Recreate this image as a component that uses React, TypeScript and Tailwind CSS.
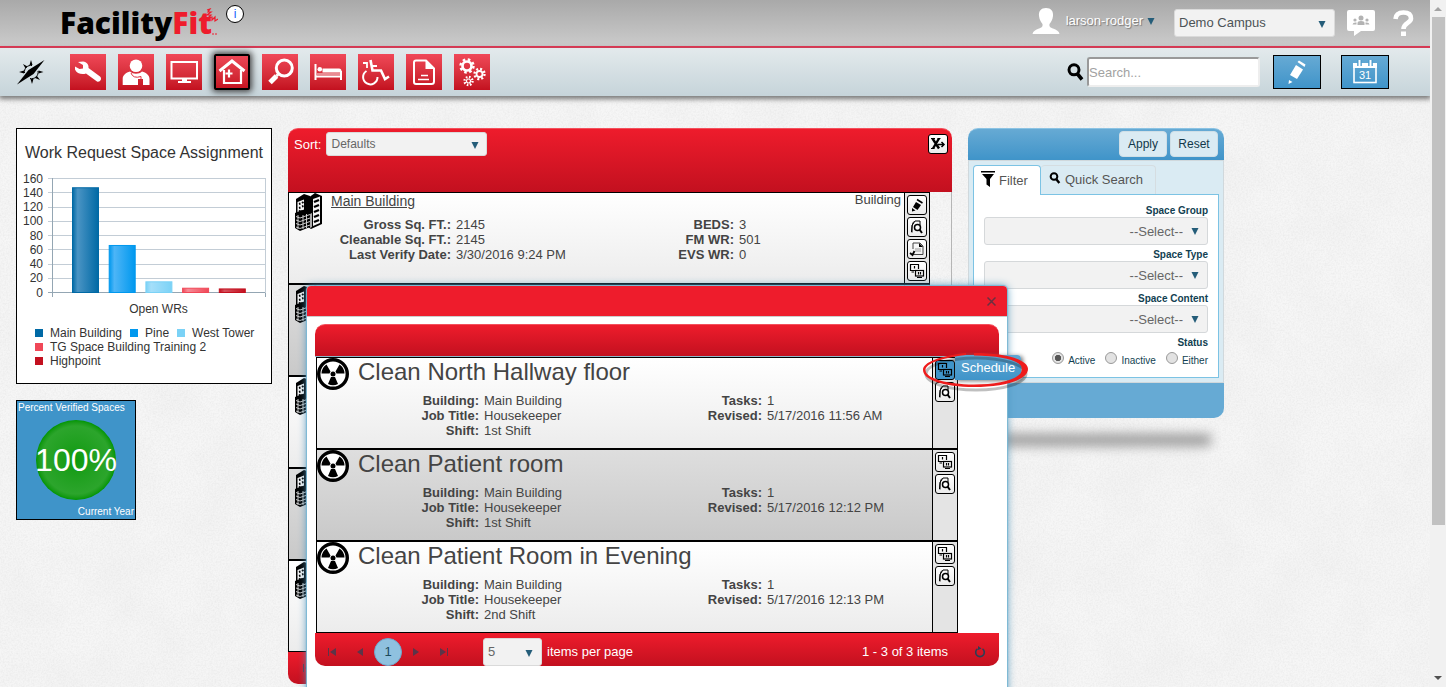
import type { ReactNode } from 'react';
import clsx from 'clsx';

type Detail = [label: string, value: string];

const chartBars = [
  { name: 'Main Building', value: 147, from: '#4a94c4', to: '#0069a5' },
  { name: 'Pine', value: 66, from: '#4db5f7', to: '#0098ee' },
  { name: 'West Tower', value: 15, from: '#a5dffa', to: '#7bd2f6' },
  { name: 'TG Space Building Training 2', value: 6, from: '#f68b96', to: '#f04858' },
  { name: 'Highpoint', value: 5, from: '#d5505c', to: '#c3101f' },
];

const axisTicks = [160, 140, 120, 100, 80, 60, 40, 20, 0];

const schedules = [
  { title: 'Clean North Hallway floor', shift: '1st Shift', revised: '5/17/2016 11:56 AM' },
  { title: 'Clean Patient room', shift: '1st Shift', revised: '5/17/2016 12:12 PM' },
  { title: 'Clean Patient Room in Evening', shift: '2nd Shift', revised: '5/17/2016 12:13 PM' },
];

/* ---------- icons ---------- */

function Gear({ cx, cy, r }: { cx: number; cy: number; r: number }) {
  const tooth = (2 * Math.PI * (r + 2)) / 16;
  return (
    <g fill="none" stroke="#fff">
      <circle cx={cx} cy={cy} r={r} strokeWidth={r * 0.6} />
      <circle cx={cx} cy={cy} r={r + 2} strokeWidth="2.4" strokeDasharray={`${tooth} ${tooth}`} />
    </g>
  );
}

const navItems: { label: string; icon: ReactNode }[] = [
  {
    label: 'Work requests',
    icon: (
      <path
        fill="#fff"
        d="M8 8L13 7.5C17 8 19 11 18.5 14L30 22.5C32.5 25 30 28.5 27 27.5L16 19.5C12 21 6.5 19.5 5 15.5L5 12.5L9.5 15L13 14.5L13 11Z"
      />
    ),
  },
  {
    label: 'Staff',
    icon: (
      <>
        <circle cx="18" cy="11.7" r="6.3" fill="#fff" />
        <path fill="#fff" d="M4.7 31V25C4.7 21 8 18.5 12 17.5C15 20.5 21 20.5 24 17.5C28 18.5 31.5 21 31.5 25V31H25V25H20V31Z" />
        <path d="M13 19Q15 25 23 22.5V25" fill="none" stroke="#e0303f" />
      </>
    ),
  },
  {
    label: 'Equipment',
    icon: (
      <>
        <rect x="5.5" y="8" width="25.5" height="16.5" fill="none" stroke="#fff" strokeWidth="2" />
        <path d="M16 25H21V27H25V29H12V27H16Z" fill="#fff" />
      </>
    ),
  },
  {
    label: 'Spaces',
    icon: (
      <>
        <path d="M5.5 17L18 7L30.5 17" fill="none" stroke="#fff" strokeWidth="3" />
        <path d="M10 16V29H27V16" fill="none" stroke="#fff" strokeWidth="2.2" />
        <path d="M15 15.5V23.5M11.5 19.5H18.5" stroke="#fff" strokeWidth="2.2" />
      </>
    ),
  },
  {
    label: 'Inspections',
    icon: (
      <>
        <circle cx="22.3" cy="14" r="8" fill="none" stroke="#fff" strokeWidth="3" />
        <path d="M16 20.5L14.5 22" stroke="#fff" strokeWidth="3" />
        <path d="M14.5 22L8 28.5" stroke="#fff" strokeWidth="5" />
      </>
    ),
  },
  {
    label: 'Beds',
    icon: (
      <>
        <path d="M5.5 10V26M5.5 22.5H31V26M31 22V17" fill="none" stroke="#fff" strokeWidth="2" />
        <circle cx="9.8" cy="15.3" r="2.3" fill="#fff" />
        <path d="M12.5 14.5H29Q31.5 14.5 31.5 17V18.5H12.5Z" fill="#fff" />
        <path d="M7 20H31" stroke="#fff" strokeOpacity=".6" strokeWidth="1.5" />
      </>
    ),
  },
  {
    label: 'Accessibility',
    icon: (
      <>
        <path d="M8.5 17A7.2 7.2 0 1 0 19.5 23" fill="none" stroke="#fff" strokeWidth="2" />
        <path d="M12.5 6L14.5 16.5H23L27 25L31 22.5" fill="none" stroke="#fff" strokeWidth="2.6" />
        <path d="M5 9H9V14M14 12H19" fill="none" stroke="#fff" strokeWidth="1.8" />
      </>
    ),
  },
  {
    label: 'Documents',
    icon: (
      <>
        <path d="M10 6.5H20L28 14.5V27.5Q28 30 25.5 30H10Q8 30 8 28V8.5Q8 6.5 10 6.5Z" fill="none" stroke="#fff" strokeWidth="2" />
        <path d="M19.5 6L28.5 15H19.5Z" fill="#fff" />
        <path d="M15 21.5H22M12 25.5H23" stroke="#fff" strokeWidth="1.6" />
      </>
    ),
  },
  {
    label: 'Settings',
    icon: (
      <>
        <Gear cx={13} cy={12} r={4.5} />
        <Gear cx={25.5} cy={20} r={3} />
        <Gear cx={14.5} cy={27} r={2} />
      </>
    ),
  },
];

function Caret({ className }: { className?: string }) {
  return (
    <svg viewBox="0 0 8 7" className={clsx('h-[7px] w-2 pointer-events-none', className)}>
      <path d="M.5 0H7.5L4 7Z" fill="#255d79" />
    </svg>
  );
}

function CompassIcon() {
  return (
    <svg viewBox="0 0 28 26" className="h-[26px] w-7">
      <path d="M14 1L15.5 6H12.5ZM15 25L13.5 20H16.5ZM2 13L7 11.5V14.5ZM26.5 13L21.5 11.5V14.5ZM6 5L10.5 7.5L8.5 9.5ZM23 21L18 19L20 17Z" />
      <path d="M7.5 14A6.5 6.5 0 0 1 15 6.500M21 12A6.500 6.500 0 0 1 13 19.500" fill="none" stroke="#000" />
      <path d="M0 25.5L11.5 11L27.5 1L16.5 15Z" />
    </svg>
  );
}

function SearchIcon({ className }: { className?: string }) {
  return (
    <svg viewBox="0 0 17 18" className={className} fill="none" stroke="#000">
      <circle cx="7" cy="6.8" r="5" strokeWidth="3" />
      <path d="M10.5 11L15 16.5" strokeWidth="3.6" />
    </svg>
  );
}

function BuildingIcon() {
  return (
    <svg viewBox="0 0 27 38" className="h-[38px] w-[27px] shrink-0">
      <path d="M13 5L20 0L27 3V31L16 36L13 34Z" />
      <path d="M18 6L25 3.5V30L18 33Z" fill="#f4f4f4" />
      <path d="M19 9L24 7M19 14L24 12M19 19L24 17M19 24L24 22M19 29L24 27" stroke="#000" strokeWidth="2.4" />
      <path d="M1 6L9 1L15 3V22H1Z" />
      <path d="M2.5 9L9 6.5V16.5L2.5 20Z" fill="#f4f4f4" />
      <path d="M4 11L5.5 10.5M7 10L8.5 9M4 15L5.5 14.5M7 13.5L8.5 13M4 18.5L5.5 17.5" stroke="#000" strokeWidth="2" />
      <path d="M0 20L7 17L15 20V34L5 38L0 35Z" />
      <path d="M1 23.5L5 25L15 21.5M1 27L5 28.5L15 25M1 30.5L5 32L15 28.5M1 34L5 35.5L15 32M3 22V36M8 22V36M11.5 21V35" fill="none" stroke="#ddd" strokeWidth=".9" />
      <path d="M15 21L17 20V34L15 35Z" fill="#aaa" />
    </svg>
  );
}

function RadiationIcon() {
  return (
    <svg viewBox="0 0 32 32" className="size-8 shrink-0">
      <circle cx="16" cy="16" r="14.3" fill="#fff" stroke="#000" strokeWidth="3.4" />
      <path d="M13.5 13.5L9.5 6.5A11 11 0 0 0 4.5 15.5L12.5 15.5ZM18.5 13.5L22.5 6.5A11 11 0 0 1 27.5 15.5L19.5 15.5ZM14 19L11 26Q16 28.5 21 26L18 19Z" />
      <circle cx="16" cy="16" r="2.5" />
    </svg>
  );
}

const editIcon = (
  <>
    <path d="M9 7L14 10L10.5 15L6 12Z" />
    <path d="M10 4.5L15.5 8" stroke="#000" strokeWidth="1.5" />
    <path d="M5 13L8.5 15.5L5 16.5Z" />
  </>
);

const previewIcon = (
  <>
    <path d="M5 15.5V8.5L8 4H13V8M7 4.5Q5 6 4.5 15" fill="none" stroke="#000" />
    <circle cx="10.5" cy="10.5" r="3" fill="#fff" stroke="#000" strokeWidth="1.5" />
    <path d="M12.5 12.5L15 16" stroke="#000" strokeWidth="2" />
  </>
);

const reportIcon = (
  <>
    <path d="M6 10V4H13L16 7V15.5H6" fill="none" stroke="#444" />
    <path d="M12 4L16 8H12Z" />
    <path d="M8 10H14M8 12H14" stroke="#999" />
    <path d="M3 14L5.5 16L7.5 12" fill="none" stroke="#000" strokeWidth="1.8" />
  </>
);

const scheduleIcon = (
  <g fill="none" stroke="#000" strokeWidth="1.2">
    <path d="M8 9.5H3.5V3.5H11.5V8M7.5 5V7.5M4.5 11H7" />
    <rect x="8.5" y="9.5" width="8" height="5.5" />
    <path d="M11.5 11V13.5M13.5 11V13.5M10 16.5H15" />
  </g>
);

const exportIcon = (
  <>
    <path d="M4.5 4.5L11 14.5M11 4.5L5 14.5" stroke="#000" strokeWidth="2.4" />
    <path d="M3 4.5H7M9.5 4.5H12.5M3 14.5H6.5" stroke="#000" />
    <path d="M10 10.5H15M13.5 8L16 10.5L13.5 13" fill="none" stroke="#000" strokeWidth="1.5" />
  </>
);

function SmallButton({ label, icon, active }: { label: string; icon: ReactNode; active?: boolean }) {
  return (
    <button
      aria-label={label}
      className={clsx(
        'flex size-5 items-center justify-center rounded-[3px] border border-black',
        active ? 'bg-[#3f94c9]' : 'bg-linear-to-b from-white to-[#ebebeb]',
      )}
    >
      <svg viewBox="1 1 18 18" className="size-[18px]">{icon}</svg>
    </button>
  );
}

/* ---------- header ---------- */

function Header() {
  return (
    <header className="flex h-12 items-center border-b-2 border-[#f0294b] bg-linear-to-b from-[#a9a9a9] to-[#cbcbcb] pr-4 pl-[60px]">
      <a href="#home" className="flex items-center font-['Open_Sans',sans-serif] text-[30px] leading-10 font-extrabold">
        <span className="text-black">Facility</span>
        <span className="text-[#ee1c2c]">Fit</span>
      </a>
      <svg viewBox="0 0 12 30" className="-ml-1.5 h-[30px] w-3" fill="none" stroke="#ee1c2c" strokeWidth="1.2">
        <path d="M1 2L4 1L2 4L5 4L1 7L5 7L2 10L6 9L6 12L9 9L9 13L12 11" />
        <path d="M6 26H8M9 26H11" />
      </svg>
      <button aria-label="About" className="mb-[18px] ml-2 flex size-[18px] items-center justify-center rounded-full border border-black bg-white text-xs text-blue-600">
        i
      </button>
      <div className="ml-auto flex items-center">
        <svg viewBox="0 0 28 28" className="mb-1 h-7 w-7" fill="#fff">
          <path d="M14 1C9 1 6.5 4 7 9C7.5 13 9 15 10.5 17C11 20 9.5 20.5 7 21.5C3.5 23 1 24 0.5 27H27.5C27 24 24.5 23 21 21.5C18.5 20.5 17 20 17.5 17C19 15 20.5 13 21 9C21.5 4 19 1 14 1Z" />
        </svg>
        <button className="mb-1 ml-1.5 flex items-center gap-1 text-[13px] text-white text-shadow-[1px_1px_1px_#777]">
          larson-rodger
          <Caret />
        </button>
        <label className="relative ml-[19px] block">
          <select aria-label="Campus" className="block h-7 w-[161px] appearance-none rounded-[3px] border border-[#dadada] bg-[#f2f2f2] pl-1 text-[13px] text-[#4c5356]">
            <option>Demo Campus</option>
          </select>
          <Caret className="absolute top-3 right-[9px]" />
        </label>
        <button aria-label="Messages" className="ml-3">
          <svg viewBox="0 0 28 26" className="h-[26px] w-7">
            <path d="M2 0H26Q28 0 28 2V19Q28 21 26 21H14L7 26V21H2Q0 21 0 19V2Q0 0 2 0Z" fill="#fff" />
            <g fill="#b3b3b3">
              <circle cx="14" cy="8" r="2.5" />
              <path d="M10.5 15V13Q10.5 11 14 11T17.5 13V15Z" />
              <circle cx="8" cy="10" r="1.6" />
              <path d="M5.5 14.5Q6 12 9.5 12.5V14.5Z" />
              <circle cx="20" cy="10" r="1.6" />
              <path d="M22.5 14.5Q22 12 18.5 12.5V14.5Z" />
            </g>
          </svg>
        </button>
        <button aria-label="Help" className="ml-[18px]">
          <svg viewBox="0 0 21 27" className="h-[27px] w-[21px]" fill="none" stroke="#fff" strokeWidth="4.6">
            <path d="M2.5 9Q3 2.5 10.5 2.5T18 8.5C18 13 10.5 13 10.5 19" />
            <path d="M10.5 21.5V26" strokeWidth="5" />
          </svg>
        </button>
      </div>
    </header>
  );
}

function NavBar() {
  const blueButton = 'flex h-[34px] w-12 items-center justify-center border border-black bg-linear-to-b from-[#66aad4] to-[#3f94c9]';
  return (
    <nav className="relative flex h-12 items-center bg-linear-to-b from-[#e3eaec] to-[#c6d4da] pr-[41px] pl-[17px] shadow-[0_2px_5px_1px_#777]">
      <a href="#dashboard" aria-label="Dashboard">
        <CompassIcon />
      </a>
      <div className="ml-[25px] flex gap-3">
        {navItems.map(({ label, icon }) => (
          <a
            key={label}
            href="#module"
            aria-label={label}
            className={clsx(
              'block size-9 bg-linear-to-b from-[#f04858] to-[#c3101f]',
              label === 'Spaces' && 'rounded-[2px] outline-2 -outline-offset-2 outline-black shadow-[0_0_6px_2px_#444]',
            )}
          >
            <svg viewBox="0 0 36 36" className="size-9">{icon}</svg>
          </a>
        ))}
      </div>
      <label htmlFor="search" aria-label="Search" className="mr-[3px] ml-auto">
        <SearchIcon className="h-[18px] w-[17px]" />
      </label>
      <input
        id="search"
        placeholder="Search..."
        className="h-[30px] w-[173px] rounded-[3px] border-2 border-t-[#999] border-r-[#eee] border-b-[#eee] border-l-[#999] bg-white text-[13px] placeholder:text-[#a2a2a2]"
      />
      <button aria-label="Edit" className={clsx(blueButton, 'ml-[13px]')}>
        <svg viewBox="0 0 18 24" className="h-6 w-[18px]" fill="#fff">
          <path d="M8 5L15 9.5L9 19L2 15Z" />
          <path d="M9.5 2L11 .5L17.5 4.5L16.5 7Z" />
          <path d="M1 20L4.5 22L.5 24Z" />
        </svg>
      </button>
      <button aria-label="Calendar" className={clsx(blueButton, 'ml-5')}>
        <svg viewBox="0 0 24 24" className="size-6">
          <rect x="1" y="6" width="22" height="16.5" fill="none" stroke="#fff" strokeWidth="1.6" />
          <path d="M0 3H24V8H0Z" fill="#fff" />
          <path d="M6.5 0V6M17.5 0V6" stroke="#4b9bcd" strokeWidth="4.6" />
          <path d="M6.5 0V6M17.5 0V6" stroke="#fff" strokeWidth="2" />
          <text x="12" y="19" textAnchor="middle" fontSize="11" fill="#fff">31</text>
        </svg>
      </button>
    </nav>
  );
}

/* ---------- left column ---------- */

function LegendItem({ name, color }: { name: string; color: string }) {
  return (
    <li className="flex items-center gap-[7px]">
      <span className="size-2" style={{ backgroundColor: color }} />
      {name}
    </li>
  );
}

function RequestChart() {
  const yFor = (value: number) => 124.5 - (value / 160) * 114;
  return (
    <section className="h-64 border border-black bg-white text-[#333]">
      <h2 className="mt-[14px] text-center text-base leading-5 whitespace-nowrap">Work Request Space Assignment</h2>
      <svg viewBox="0 0 254 150" className="mt-[5px] block h-[150px] w-full text-xs" fill="#333">
        <defs>
          {chartBars.map((bar, i) => (
            <linearGradient key={bar.name} id={`bar-${i}`}>
              <stop offset="0" stopColor={bar.to} />
              <stop offset=".2" stopColor={bar.from} />
              <stop offset="1" stopColor={bar.to} />
            </linearGradient>
          ))}
        </defs>
        {axisTicks.map((tick) => (
          <g key={tick}>
            <text x="26" y={yFor(tick) + 4} textAnchor="end">{tick}</text>
            <path d={`M31 ${Math.floor(yFor(tick)) + 0.5}H248`} stroke={tick ? '#c3cdd6' : '#94a6b3'} />
          </g>
        ))}
        {chartBars.map((bar, i) => (
          <rect
            key={bar.name}
            x={55.5 + i * 36.7}
            y={yFor(bar.value)}
            width="26"
            height={124.5 - yFor(bar.value)}
            fill={`url(#bar-${i})`}
            stroke={bar.to}
          />
        ))}
        <path d="M35.5 10V129M248.5 125V129" stroke="#94a6b3" />
        <path d="M248.5 10V125" stroke="#c3cdd6" />
        <text x="141.5" y="145" textAnchor="middle">Open WRs</text>
      </svg>
      <ul className="mt-2 ml-[18px] flex flex-wrap gap-x-2 text-xs leading-[14px]">
        {chartBars.map((bar) => (
          <LegendItem key={bar.name} name={bar.name} color={bar.to} />
        ))}
      </ul>
    </section>
  );
}

function VerifiedGauge() {
  return (
    <section className="flex size-[120px] flex-col items-center justify-between border border-black bg-[#3f94c9] px-px text-[10px] leading-[14px] text-white">
      <h2 className="self-start whitespace-nowrap">Percent Verified Spaces</h2>
      <p className="flex size-20 items-center justify-center rounded-full bg-radial from-[#0b9a0b] via-[#2ca52c] via-60% to-[#049604] to-70% text-[32px]">
        100%
      </p>
      <p className="self-end">Current Year</p>
    </section>
  );
}

/* ---------- grids ---------- */

function DetailList({ items }: { items: Detail[] }) {
  return (
    <dl className="w-[283px] text-[13px] leading-[15px] whitespace-nowrap">
      {items.map(([label, value]) => (
        <div key={label} className="flex gap-[5px]">
          <dt className="w-[162px] shrink-0 text-right font-bold">{label}:</dt>
          <dd>{value}</dd>
        </div>
      ))}
    </dl>
  );
}

type RowProps = { shaded?: boolean; icon: ReactNode; children?: ReactNode; actions?: ReactNode };

function GridRow({ shaded, icon, children, actions }: RowProps) {
  return (
    <li
      className={clsx(
        'flex h-[92px] w-[642px] border border-black bg-linear-to-b text-[#444]',
        shaded ? 'from-[#dedede] to-[#c9c9c9]' : 'from-white to-[#ececec]',
      )}
    >
      <div className="relative flex-1">
        <div className="absolute">{icon}</div>
        {children}
      </div>
      <div className="flex w-[25px] flex-col items-center gap-0.5 border-l border-black bg-[#e4e4e4] pt-0.5">{actions}</div>
    </li>
  );
}

function PagerButton({ label, d }: { label: string; d: string }) {
  return (
    <button aria-label={label} className="flex h-7 w-7 items-center justify-center">
      <svg viewBox="0 0 8 8" className="size-2">
        <path d={d} fill="#5d3448" />
      </svg>
    </button>
  );
}

const firstPage = 'M0 0H1V8H0ZM8 0V8L2 4Z';

function SpaceGrid() {
  return (
    <section className="min-w-0 flex-1">
      <div className="flex h-16 items-start rounded-t-[10px] border-t border-[#f3505c] bg-linear-to-b from-[#ee1c2c] to-[#c3101f] pr-1 pl-1.5 text-[13px]">
        <label htmlFor="sort" className="mt-2 mr-[5px] leading-4 text-white">Sort:</label>
        <div className="relative mt-[3px]">
          <select id="sort" className="block h-6 w-[161px] appearance-none rounded-[3px] border border-[#dadada] bg-[#f2f2f2] pl-1 text-xs text-[#666]">
            <option>Defaults</option>
          </select>
          <Caret className="absolute top-2.5 right-2" />
        </div>
        <div className="mt-[5px] ml-auto">
          <SmallButton label="Export to Excel" icon={exportIcon} />
        </div>
      </div>
      <ul className="border-r border-[#b5b5b5]">
        <GridRow
          icon={<div className="pl-1.5"><BuildingIcon /></div>}
          actions={
            <>
              <SmallButton label="Edit" icon={editIcon} />
              <SmallButton label="Preview" icon={previewIcon} />
              <SmallButton label="Report" icon={reportIcon} />
              <SmallButton label="Schedule" icon={scheduleIcon} />
            </>
          }
        >
          <div className="flex justify-between pr-[3px] pl-[42px]">
            <a href="#main-building" className="text-sm leading-4 underline">Main Building</a>
            <span className="text-[13px] leading-[14px]">Building</span>
          </div>
          <div className="mt-2 flex">
            <DetailList items={[['Gross Sq. FT.', '2145'], ['Cleanable Sq. FT.', '2145'], ['Last Verify Date', '3/30/2016 9:24 PM']]} />
            <DetailList items={[['BEDS', '3'], ['FM WR', '501'], ['EVS WR', '0']]} />
          </div>
        </GridRow>
        {[1, 2, 3, 4].map((n) => (
          <GridRow key={n} shaded={n % 2 === 1} icon={<div className="pl-1.5"><BuildingIcon /></div>} />
        ))}
      </ul>
      <div className="flex h-8 items-center rounded-b-[10px] bg-linear-to-b from-[#ee1c2c] to-[#c3101f] pl-[5px]">
        <PagerButton label="First page" d={firstPage} />
      </div>
    </section>
  );
}

function ScheduleDialog() {
  return (
    <div
      role="dialog"
      aria-label="Schedules"
      className="absolute top-[286px] left-[307px] h-[480px] w-[700px] rounded-t bg-white shadow-[0_0_1px_1px_#7cb8d4,0_0_8px_#4a93bb]"
    >
      <div className="flex h-[30px] items-center justify-end rounded-t bg-[#ee1c2c] pr-2.5">
        <button aria-label="Close" className="p-px">
          <svg viewBox="0 0 9 9" className="size-[9px]" stroke="#6b3040" strokeWidth="1.5">
            <path d="M.5 .5L8.5 8.5M8.5 .5L.5 8.5" />
          </svg>
        </button>
      </div>
      <div className="border-t border-[#ccc] px-2 pt-[7px]">
        <div className="h-8 rounded-t-[10px] border-t border-[#f3505c] bg-linear-to-b from-[#ee1c2c] to-[#c3101f]" />
        <ul className="border-t border-[#8db6c8] pl-px">
          {schedules.map((row, i) => (
            <GridRow
              key={row.title}
              shaded={i === 1}
              icon={<RadiationIcon />}
              actions={
                <>
                  <SmallButton label="Schedule" icon={scheduleIcon} active={i === 0} />
                  <SmallButton label="Preview" icon={previewIcon} />
                </>
              }
            >
              <h3 className="pl-[41px] text-2xl leading-[27px]">{row.title}</h3>
              <div className="mt-2 flex">
                <DetailList items={[['Building', 'Main Building'], ['Job Title', 'Housekeeper'], ['Shift', row.shift]]} />
                <DetailList items={[['Tasks', '1'], ['Revised', row.revised]]} />
              </div>
            </GridRow>
          ))}
        </ul>
        <div className="flex h-[33px] items-center rounded-b-[10px] bg-linear-to-b from-[#ee1c2c] to-[#c3101f] pt-1 pr-1.5 pl-[3px] text-[13px] text-white">
          <PagerButton label="First page" d={firstPage} />
          <PagerButton label="Previous page" d="M7 0V8L1 4Z" />
          <button className="size-7 rounded-full border border-[#6ea9cd] bg-[#8fc1df] text-[#1c4a5c]">1</button>
          <PagerButton label="Next page" d="M1 0V8L7 4Z" />
          <PagerButton label="Last page" d="M7 0H8V8H7ZM0 0V8L6 4Z" />
          <div className="relative ml-[25px]">
            <select id="page-size" className="block h-7 w-[59px] appearance-none rounded-[3px] border border-[#dadada] bg-[#f2f2f2] pl-1 text-[13px] text-[#666]">
              <option>5</option>
            </select>
            <Caret className="absolute top-3 right-[9px]" />
          </div>
          <label htmlFor="page-size" className="ml-[5px]">items per page</label>
          <span className="ml-auto">1 - 3 of 3 items</span>
          <button aria-label="Refresh" className="ml-[19px] flex size-[26px] items-center justify-center">
            <svg viewBox="0 0 12 12" className="size-3" fill="none" stroke="#2c3f56" strokeWidth="1.6">
              <path d="M3.5 2.8A4.3 4.3 0 1 0 8.5 2.8" />
              <path d="M4 0V4L7.5 2.5Z" fill="#2c3f56" stroke="none" />
            </svg>
          </button>
        </div>
      </div>
      <div role="tooltip" className="absolute top-[69px] left-[648px] h-[25px] w-[66px] rounded-r bg-linear-to-b from-[#5fa6d2] to-[#3f94c9] pl-1.5 text-[13px] leading-[26px] text-white shadow-[2px_1px_4px_#777]">
        Schedule
      </div>
      <svg viewBox="0 0 116 46" className="pointer-events-none absolute top-[62px] left-[609px] h-[46px] w-[116px]" fill="none">
        <ellipse cx="60" cy="26" rx="50" ry="16" stroke="#000" strokeOpacity=".25" strokeWidth="3" />
        <path
          fillRule="evenodd"
          fill="#ee1c1c"
          d="M58 5C88 5 112 11 112 21C112 32 88 39 58 39C28 39 7 32 7 22C7 14 24 8 50 5L50 7C28 9.5 9.5 15 9.5 22C9.5 30 30 36.5 58 36.5C84 36.5 106 31 106 21C106 13 88 8 58 7.5Z"
        />
      </svg>
    </div>
  );
}

/* ---------- right column ---------- */

function FilterSelect({ label }: { label: string }) {
  return (
    <label className="mb-[3px] block text-[10px] leading-[13px] font-bold text-[#123f52]">
      <span className="block text-right">{label}</span>
      <span className="relative block">
        <select className="block h-7 w-full appearance-none rounded-[3px] border border-[#d5d8da] bg-[#f2f2f2] pr-6 text-right text-[13px] font-normal text-[#666] [text-align-last:right]">
          <option>--Select--</option>
        </select>
        <Caret className="absolute top-[11px] right-[9px]" />
      </span>
    </label>
  );
}

function StatusRadio({ label, checked }: { label: string; checked?: boolean }) {
  return (
    <label className="flex items-start gap-1">
      <input
        type="radio"
        name="status"
        defaultChecked={checked}
        className="size-3 appearance-none rounded-full border border-[#999] bg-[#e2e2e2] checked:bg-radial checked:from-[#555] checked:from-40% checked:to-[#e2e2e2] checked:to-50%"
      />
      <span className="pt-[3px] leading-3">{label}</span>
    </label>
  );
}

function FilterPanel() {
  const action = 'h-[26px] w-12 rounded border border-[#cfdfe7] bg-[#daebf3] text-xs text-[#12384a]';
  return (
    <aside className="w-64 shrink-0">
      <div className="flex h-8 items-start justify-end gap-[3px] rounded-t-[10px] border-t border-[#8cc3e3] bg-linear-to-b from-[#66aad4] to-[#3f94c9] pt-0.5 pr-1.5">
        <button className={action}>Apply</button>
        <button className={action}>Reset</button>
      </div>
      <div className="border border-[#d0d8dc] bg-[#daebf3] px-1 py-1">
        <div role="tablist" className="flex text-[13px] text-[#555]">
          <button role="tab" aria-selected="true" className="relative -mb-px flex h-[30px] w-[68px] items-center gap-1 rounded-t border border-b-0 border-[#7cc3e4] bg-white pl-[7px]">
            <svg viewBox="0 0 14 16" className="mb-1 h-4 w-3.5">
              <path d="M0 0H14V1.5H0ZM1 3H13L9 8V16L5.5 13.5V8Z" />
            </svg>
            Filter
          </button>
          <button role="tab" aria-selected="false" className="flex h-[29px] items-center gap-1 rounded-t border border-b-0 border-l-0 border-[#d5dde1] pr-3 pl-2">
            <SearchIcon className="mb-1 h-3 w-3" />
            Quick Search
          </button>
        </div>
        <div className="border border-[#7cc3e4] bg-white px-2.5 pt-[9px] pb-2.5">
          <FilterSelect label="Space Group" />
          <FilterSelect label="Space Type" />
          <FilterSelect label="Space Content" />
          <fieldset className="text-[10px] text-[#123f52]">
            <legend className="ml-auto leading-[13px] font-bold">Status</legend>
            <div className="mt-[3px] flex justify-end gap-2.5">
              <StatusRadio label="Active" checked />
              <StatusRadio label="Inactive" />
              <StatusRadio label="Either" />
            </div>
          </fieldset>
        </div>
      </div>
      <div className="h-[35px] rounded-b-[10px] bg-[#66aad4]" />
      <div className="mx-3 mt-4 h-3 rounded-full bg-[#999] blur-[6px]" />
    </aside>
  );
}

/* ---------- page ---------- */

function PlasterTexture() {
  return (
    <svg className="absolute inset-0 h-full w-full">
      <filter id="grain">
        <feTurbulence type="fractalNoise" baseFrequency=".6" numOctaves="2" seed="4" />
        <feColorMatrix values="0 0 0 0 .55  0 0 0 0 .55  0 0 0 0 .55  .36 0 0 0 -.13" />
      </filter>
      <filter id="cloud">
        <feTurbulence type="fractalNoise" baseFrequency=".02" numOctaves="4" seed="9" />
        <feColorMatrix values="0 0 0 0 .5  0 0 0 0 .5  0 0 0 0 .5  .12 0 0 0 -.04" />
      </filter>
      <rect width="100%" height="100%" filter="url(#grain)" />
      <rect width="100%" height="100%" filter="url(#cloud)" />
    </svg>
  );
}

function ScrollTrack() {
  return (
    <div className="flex w-4 flex-col items-center bg-[#f1f1f1]">
      <svg viewBox="0 0 8 17" className="h-[17px] w-2">
        <path d="M0 11L4 7L8 11Z" fill="#a3a3a3" />
      </svg>
      <div className="h-[74%] w-[13px] bg-[#c1c1c1]" />
      <svg viewBox="0 0 8 17" className="mt-auto h-[17px] w-2">
        <path d="M0 6L4 10L8 6Z" fill="#505050" />
      </svg>
    </div>
  );
}

export default function App() {
  return (
    <div className="flex h-screen overflow-hidden font-['Liberation_Sans',Arial,sans-serif]">
      <div className="relative min-w-0 flex-1 overflow-hidden bg-[#f6f6f6]">
        <PlasterTexture />
        <div className="relative">
          <Header />
          <NavBar />
          <main className="flex max-w-[1240px] gap-4 px-4 pt-8">
            <div className="flex w-64 shrink-0 flex-col gap-4">
              <RequestChart />
              <VerifiedGauge />
            </div>
            <SpaceGrid />
            <FilterPanel />
          </main>
          <ScheduleDialog />
        </div>
      </div>
      <ScrollTrack />
    </div>
  );
}
